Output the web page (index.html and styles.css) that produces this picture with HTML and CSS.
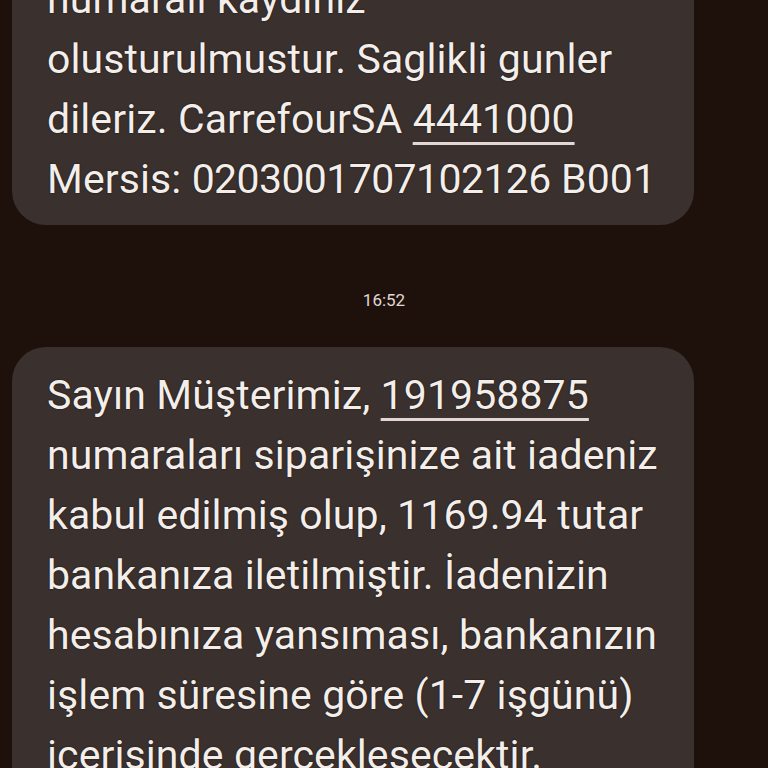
FILE: index.html
```html
<!DOCTYPE html>
<html lang="tr">
<head>
<meta charset="utf-8">
<link rel="stylesheet" href="styles.css">
</head>
<body>
<div class="thread">
  <div class="bubble first">
    <p class="msg">numarali kaydiniz<br>olusturulmustur. Saglikli gunler<br>dileriz. CarrefourSA <span class="link">4441000</span><br>Mersis: <span class="digits">0203001707102126</span> B001</p>
  </div>
  <div class="time">16:52</div>
  <div class="bubble second">
    <p class="msg">Sayın Müşterimiz, <span class="link">191958875</span><br>numaraları siparişinize ait iadeniz<br>kabul edilmiş olup, 1169.94 tutar<br>bankanıza iletilmiştir. İadenizin<br>hesabınıza yansıması, bankanızın<br>işlem süresine göre (1-7 işgünü)<br>içerisinde gerçekleşecektir.</p>
  </div>
</div>
</body>
</html>
```
FILE: styles.css
```css
html, body {
  margin: 0;
  padding: 0;
  background: #1e110c;
  overflow: hidden;
  height: 768px;
}
.thread {
  display: flex;
  flex-direction: column;
  align-items: flex-start;
  padding: 0 74px 0 12px;
  margin-top: -45px;
}
.bubble {
  background: #3a302d;
  border-radius: 34px;
  width: 682px;
  box-sizing: border-box;
  padding: 14px 20px 16px 35px;
}
.bubble.first {
  border-top-left-radius: 0;
  border-top-right-radius: 0;
}
.bubble.second {
  padding-top: 18px;
}
.msg {
  margin: 0;
  font-family: Roboto, "Noto Sans", sans-serif;
  font-size: 41px;
  line-height: 60px;
  color: #f4eeeb;
  letter-spacing: 0.1px;
  white-space: nowrap;
  text-shadow: 0 0 1.5px rgba(0, 0, 0, 0.85);
}
.digits {
  letter-spacing: -0.6px;
}
.link {
  text-decoration: underline;
  text-decoration-thickness: 3px;
  text-underline-offset: 9px;
  text-decoration-color: #e4d6d2;
}
.time {
  align-self: stretch;
  text-align: center;
  font-family: Roboto, "Noto Sans", sans-serif;
  font-size: 17px;
  color: #e0d8d4;
  margin: 65px 0 37px 62px;
  line-height: 20px;
}
```
